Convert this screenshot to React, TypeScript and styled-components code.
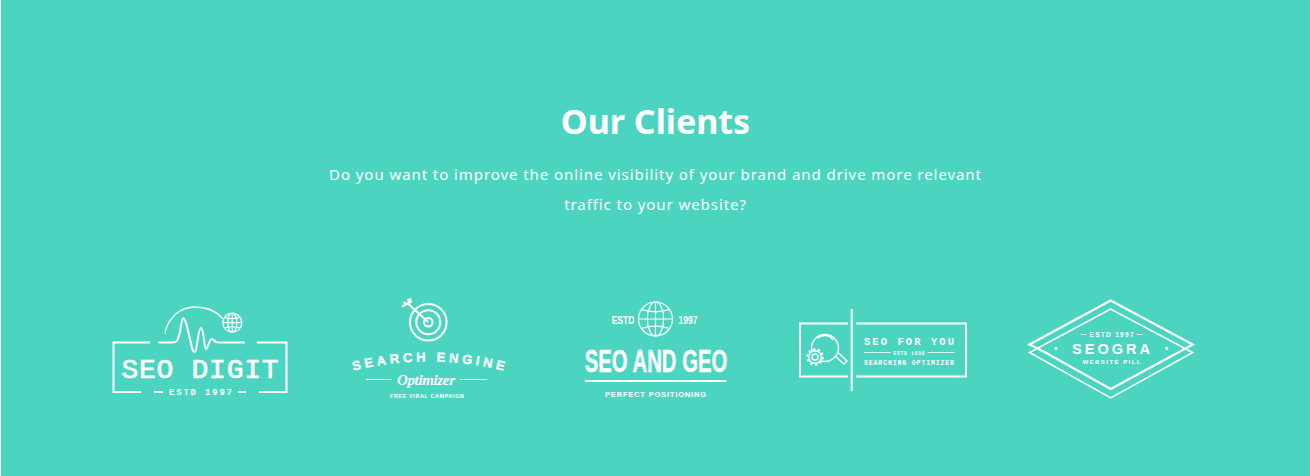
import React from "react";
import styled, { createGlobalStyle } from "styled-components";

const Global = createGlobalStyle`
  html, body { margin: 0; padding: 0; background: #fff; }
`;

const Section = styled.section`
  box-sizing: border-box;
  height: 476px;
  margin-left: 1px;
  background: #4bd5c0;
  padding-top: 96px;
  display: flex;
  flex-direction: column;
  align-items: center;
  color: #fff;
  overflow: hidden;
`;

const Title = styled.h2`
  margin: 0;
  font: 700 34px/50px "Noto Sans", "Open Sans", sans-serif;
  color: #fff;
`;

const Lead = styled.p`
  margin: 13px 0 0;
  width: 680px;
  text-align: center;
  font: 400 15px/30px "Noto Sans", "Open Sans", sans-serif;
  letter-spacing: 0.93px;
  color: #fff;
`;

const LogoRow = styled.div`
  margin-top: 76px;
  width: 1140px;
  display: grid;
  grid-template-columns: repeat(5, 228px);
`;

const LogoSvg = styled.svg`
  display: block;
  width: 228px;
  height: 110px;
  fill: none;
  stroke: #fff;
  overflow: visible;
`;

type LabelProps = {
  x: number;
  y: number;
  size: number;
  len?: number;
  weight?: number;
  family?: string;
  stretch?: number;
  outline?: number;
  italic?: boolean;
  children: React.ReactNode;
};

const LabelText = styled.text<{ $size: number; $weight: number; $family: string; $italic: boolean; $outline: number }>`
  fill: #fff;
  stroke: ${(p) => (p.$outline ? "#fff" : "none")};
  stroke-width: ${(p) => p.$outline}px;
  text-anchor: middle;
  font-size: ${(p) => p.$size}px;
  font-weight: ${(p) => p.$weight};
  font-family: ${(p) => p.$family};
  font-style: ${(p) => (p.$italic ? "italic" : "normal")};
`;

const MONO = `"Liberation Mono", monospace`;
const SANS = `"Liberation Sans", sans-serif`;
const SERIF = `"Liberation Serif", serif`;

const Label = ({ x, y, size, len, weight = 700, family = SANS, stretch, outline = 0, italic = false, children }: LabelProps) => (
  <LabelText
    x={stretch ? 0 : x}
    y={stretch ? 0 : y}
    transform={stretch ? `translate(${x} ${y}) scale(${stretch} 1)` : undefined}
    $size={size}
    $weight={weight}
    $family={family}
    $italic={italic}
    $outline={outline}
    textLength={len}
  >
    {children}
  </LabelText>
);

const Globe = ({ cx, cy, r, w = 1 }: { cx: number; cy: number; r: number; w?: number }) => (
  <g strokeWidth={w}>
    <circle cx={cx} cy={cy} r={r} />
    <ellipse cx={cx} cy={cy} rx={r * 0.48} ry={r} />
    <path d={`M${cx} ${cy - r}V${cy + r}M${cx - r} ${cy}H${cx + r}`} />
    <path d={`M${cx - r * 0.8} ${cy - r * 0.55}Q${cx} ${cy - r * 0.3} ${cx + r * 0.8} ${cy - r * 0.55}`} />
    <path d={`M${cx - r * 0.8} ${cy + r * 0.55}Q${cx} ${cy + r * 0.3} ${cx + r * 0.8} ${cy + r * 0.55}`} />
  </g>
);

const SeoDigit = () => (
  <LogoSvg viewBox="86 295 228 110">
    <g strokeWidth={2}>
      <path d="M150 342.500H113.500V392H141M259 392H286.500V342.500H257" />
      <path d="M159 342.500H172C178 342.500 178 339 180 332C181 326 182 318 183 318C186 318 188 332 191 343C192 350 193 352 195 352C197 352 198 328 201 328C204 328 204 349 206 349C208 349 209 339 212 339C214 339 214 342.500 218 342.500H244" strokeLinecap="round" />
      <path d="M165 333C168 317 181 307 195 307C206 307 216 311 222 318" strokeLinecap="round" strokeWidth={1.300} />
      <path d="M154 392H163M238 392H246" />
    </g>
    <Globe cx={232.300} cy={322.700} r={9.500} w={1.200} />
    <Label x={200} y={377.500} size={28} len={157} weight={400} outline={0.7} family={MONO}>SEO DIGIT</Label>
    <Label x={200.500} y={395} size={9} len={63} family={MONO}>ESTD 1997</Label>
  </LogoSvg>
);

const SearchEngine = () => (
  <LogoSvg viewBox="314 295 228 110">
    <g strokeWidth={2}>
      <circle cx={428.300} cy={322.300} r={18.300} />
      <circle cx={428.300} cy={322.300} r={12} />
      <circle cx={428.300} cy={322.300} r={4.300} />
      <path d="M428 322L409 304.500" />
      <path d="M403.500 302.500L409.500 304.500L408 299M407 304L402 306.500M411 303L410 298" />
    </g>
    <defs>
      <path id="arc-search" d="M352 371Q428 352 505 371" />
    </defs>
    <LabelText $size={13} $weight={700} $family={SANS} $italic={false} $outline={0.3}>
      <textPath href="#arc-search" startOffset="50%" textLength={152}>SEARCH ENGINE</textPath>
    </LabelText>
    <path d="M366 379.500H392M460 379.500H487" strokeWidth={1} />
    <Label x={426} y={385} size={15} len={58} weight={700} family={SERIF} italic>Optimizer</Label>
    <Label x={427} y={398} size={5.500} len={74}>FREE VIRAL CAMPAIGN</Label>
  </LogoSvg>
);

const SeoGeo = () => (
  <LogoSvg viewBox="542 295 228 110">
    <Globe cx={655.500} cy={319} r={17} w={1.200} />
    <Label x={623} y={324} size={10} stretch={0.85}>ESTD</Label>
    <Label x={688} y={324} size={10} stretch={0.85}>1997</Label>
    <Label x={656} y={372} size={32} stretch={0.635} outline={0.4}>SEO AND GEO</Label>
    <path d="M585 381H726.500" strokeWidth={1.800} />
    <Label x={655.500} y={396.500} size={7.500} len={101}>PERFECT POSITIONING</Label>
  </LogoSvg>
);

const SeoForYou = () => (
  <LogoSvg viewBox="770 295 228 110">
    <g strokeWidth={2}>
      <path d="M851.700 309V391" />
      <path d="M848 323.500H800V376.500H848M856 323.500H966V376.500H856" />
    </g>
    <g strokeWidth={1.400}>
      <circle cx={825} cy={348} r={13.500} />
      <path d="M818 338A10 10 0 0 1 833 340" />
      <path d="M835 356L844 364L847 361L838 352.500" strokeLinejoin="round" />
      <circle cx={815} cy={357} r={6.300} fill="#4bd5c0" />
      <circle cx={815} cy={357} r={3} />
      <circle cx={815} cy={357} r={7.800} strokeWidth={2} strokeDasharray="2.500 2.400" />
    </g>
    <path d="M864 352.500H890.500M927.500 352.500H954.500" strokeWidth={0.800} />
    <Label x={909} y={345} size={10.500} len={90} family={MONO}>SEO FOR YOU</Label>
    <Label x={909} y={354.500} size={4.500} len={31} family={MONO}>ESTD 1998</Label>
    <Label x={909} y={365} size={6.500} len={90} family={MONO}>SEARCHING OPTIMIZER</Label>
  </LogoSvg>
);

const Seogra = () => (
  <LogoSvg viewBox="998 295 228 110">
    <path d="M1043.500 351.500L1029.500 344.500L1110.700 300.500L1192.700 344.500L1180 351.500M1043.500 351.500L1110.700 389L1180 351.500" strokeWidth={2.200} />
    <path d="M1110.700 309L1029.500 352.500L1110.700 398L1192.700 352.500Z" strokeWidth={1.500} />
    <path d="M1081 334.500H1086M1137 334.500H1142" strokeWidth={1} />
    <circle cx={1056} cy={348.300} r={1.600} fill="#fff" stroke="none" />
    <circle cx={1166.700} cy={348.300} r={1.600} fill="#fff" stroke="none" />
    <Label x={1111.500} y={337} size={6.500} len={44}>ESTD 1997</Label>
    <Label x={1111} y={353.500} size={14.500} len={78} weight={700}>SEOGRA</Label>
    <Label x={1111.500} y={364} size={6} len={58}>WEBSITE PILL</Label>
  </LogoSvg>
);

export default function App() {
  return (
    <>
      <Global />
      <Section>
        <Title>Our Clients</Title>
        <Lead>
          Do you want to improve the online visibility of your brand and drive more relevant traffic to your website?
        </Lead>
        <LogoRow>
          <SeoDigit />
          <SearchEngine />
          <SeoGeo />
          <SeoForYou />
          <Seogra />
        </LogoRow>
      </Section>
    </>
  );
}
